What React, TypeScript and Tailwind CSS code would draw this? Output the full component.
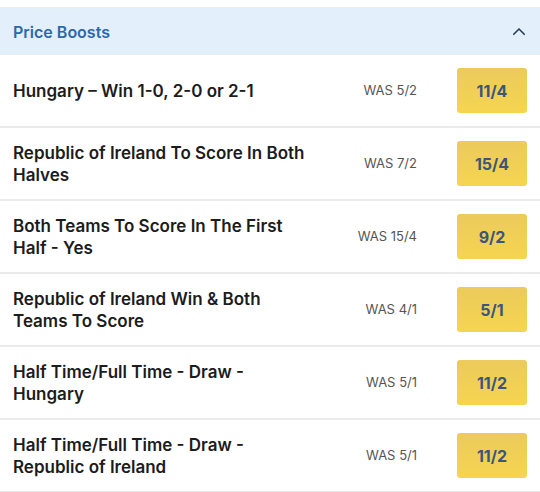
const boosts = [
  { title: 'Hungary – Win 1-0, 2-0 or 2-1', was: '5/2', odds: '11/4' },
  { title: 'Republic of Ireland To Score In Both Halves', was: '7/2', odds: '15/4' },
  { title: 'Both Teams To Score In The First Half - Yes', was: '15/4', odds: '9/2' },
  { title: 'Republic of Ireland Win & Both Teams To Score', was: '4/1', odds: '5/1' },
  { title: 'Half Time/Full Time - Draw - Hungary', was: '5/1', odds: '11/2' },
  { title: 'Half Time/Full Time - Draw - Republic of Ireland', was: '5/1', odds: '11/2' },
]

export default function App() {
  return (
    <div className="w-[540px] h-[492px] overflow-hidden bg-white font-['Inter',sans-serif]">
      <div className="h-[8px] border-b border-[#eeeeee]" />
      <div className="h-[47px] bg-[#e3f0fb] flex items-center justify-between pl-[13px] pr-[12px]">
        <span className="text-[16px] font-semibold text-[#2f68aa]">Price Boosts</span>
        <svg width="18" height="18" viewBox="0 0 24 24" fill="none" stroke="#2c3e57" strokeWidth="2.2" strokeLinecap="round" strokeLinejoin="round">
          <path d="M5 15l7-7 7 7" />
        </svg>
      </div>
      {boosts.map((b, i) => (
        <div key={i} className="h-[73px] border-b-2 border-[#ebebeb] flex items-center pl-[13px] pr-[13px]">
          <div className="w-[300px] text-[17px] leading-[22px] font-semibold text-[#1c1c1c]">{b.title}</div>
          <div className="flex-1 text-right text-[13px] text-[#555555] pr-[40px]">WAS {b.was}</div>
          <div className="w-[70px] h-[45px] rounded-[3px] bg-gradient-to-b from-[#ecca5c] to-[#f5d54f] flex items-center justify-center text-[16px] font-bold text-[#3b557c]">
            {b.odds}
          </div>
        </div>
      ))}
    </div>
  )
}
